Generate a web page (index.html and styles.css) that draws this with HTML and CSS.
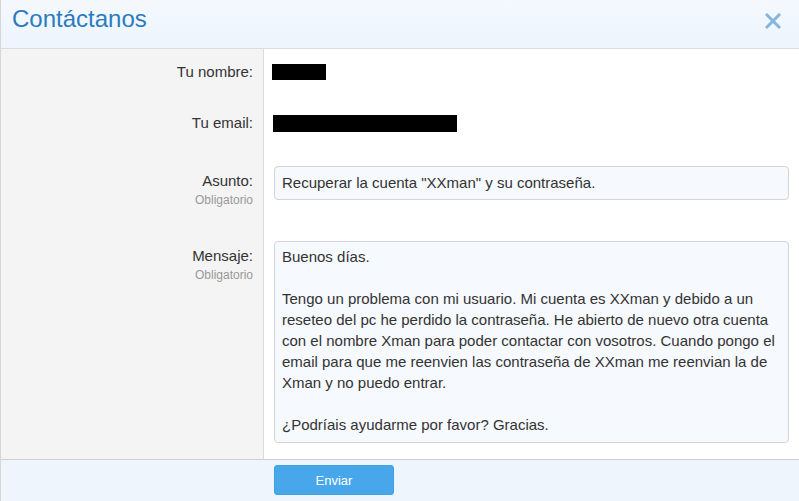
FILE: index.html
```html
<!DOCTYPE html>
<html lang="es">
<head>
  <meta charset="UTF-8">
  <meta name="viewport" content="width=device-width, initial-scale=1.0">
  <title>Contáctanos</title>
  <link rel="stylesheet" href="styles.css">
</head>
<body>
  <div class="dialog">
    <div class="dialog-header">
      <h1>Contáctanos</h1>
      <a href="#" class="close" aria-label="Cerrar">
        <svg width="16" height="16" viewBox="0 0 16 16"><path d="M2 2 L14 14 M14 2 L2 14" stroke="#86b6dd" stroke-width="3" stroke-linecap="square"/></svg>
      </a>
    </div>

    <div class="dialog-body">
      <div class="row row-name">
        <div class="label">Tu nombre:</div>
        <div class="field"><span class="redacted redacted-name"></span></div>
      </div>
      <div class="row row-email">
        <div class="label">Tu email:</div>
        <div class="field"><span class="redacted redacted-email"></span></div>
      </div>
      <div class="row row-subject">
        <div class="label">Asunto:<small>Obligatorio</small></div>
        <div class="field"><div class="input">Recuperar la cuenta "XXman" y su contraseña.</div></div>
      </div>
      <div class="row row-message">
        <div class="label">Mensaje:<small>Obligatorio</small></div>
        <div class="field">
          <div class="textarea">Buenos días.

Tengo un problema con mi usuario. Mi cuenta es XXman y debido a un
reseteo del pc he perdido la contraseña. He abierto de nuevo otra cuenta
con el nombre Xman para poder contactar con vosotros. Cuando pongo el
email para que me reenvien las contraseña de XXman me reenvian la de
Xman y no puedo entrar.

¿Podríais ayudarme por favor? Gracias.</div>
        </div>
      </div>
    </div>

    <div class="dialog-footer">
      <div class="spacer"></div>
      <button class="btn">Enviar</button>
    </div>
  </div>
</body>
</html>
```

FILE: styles.css
```css
body {
  margin: 0;
  font-family: "Liberation Sans", Arial, sans-serif;
  font-size: 15px;
  color: #333;
  background: #fff;
}
.dialog {
  width: 799px;
  height: 501px;
  border-left: 1px solid #d6d6d6;
  box-sizing: border-box;
  display: flex;
  flex-direction: column;
  overflow: hidden;
}
.dialog-header {
  height: 48px;
  display: flex;
  align-items: center;
  justify-content: space-between;
  padding: 0 18px 0 11px;
  background: linear-gradient(#f5f9fe, #ecf4fd);
  border-bottom: 1px solid #dcdcdc;
  flex-shrink: 0;
}
.dialog-header h1 {
  margin: 0;
  font-size: 24px;
  font-weight: normal;
  color: #2b7cbf;
  line-height: 30px;
  margin-top: -10px;
}
.close {
  display: flex;
  margin-top: -6px;
}
.dialog-body {
  flex: 1;
  display: flex;
  flex-direction: column;
  background: linear-gradient(to right, #f4f4f4 0, #f4f4f4 262px, #dcdcdc 262px, #dcdcdc 263px, #fff 263px);
}
.row {
  display: flex;
  flex-shrink: 0;
}
.label {
  width: 252px;
  padding-right: 10px;
  padding-top: 13px;
  text-align: right;
  line-height: 20px;
  flex-shrink: 0;
}
.label small {
  display: block;
  font-size: 12px;
  color: #999;
  line-height: 18px;
}
.field {
  flex: 1;
  padding: 15px 10px 0 11px;
}
.redacted {
  display: inline-block;
  background: #000;
  vertical-align: top;
}
.row-name,
.row-email {
  height: 51px;
}
.redacted-name {
  width: 54px;
  height: 16px;
  margin-left: -2px;
}
.redacted-email {
  width: 184px;
  height: 17px;
  margin-left: -1px;
}
.row-subject {
  height: 75px;
}
.row-subject .label,
.row-message .label {
  padding-top: 20px;
}
.input, .textarea {
  background: #f6f9fd;
  border: 1px solid #d4d4d4;
  border-radius: 4px;
  padding: 0 7px;
}
.input {
  height: 32px;
  line-height: 32px;
}
.row-message {
  flex: 1;
}
.textarea {
  box-sizing: border-box;
  height: 202px;
  padding-top: 4px;
  line-height: 21px;
  white-space: pre-line;
}
.dialog-footer {
  height: 41px;
  flex-shrink: 0;
  border-top: 1px solid #cfcfcf;
  background: #eef5fd;
  display: flex;
  align-items: flex-start;
}
.spacer {
  width: 273px;
}
.btn {
  margin-top: 5px;
  width: 120px;
  height: 30px;
  background: #48a7eb;
  border: 1px solid #40a0e6;
  border-radius: 3px;
  color: #fff;
  font-family: "Liberation Sans", Arial, sans-serif;
  font-size: 13px;
  cursor: pointer;
}
```
